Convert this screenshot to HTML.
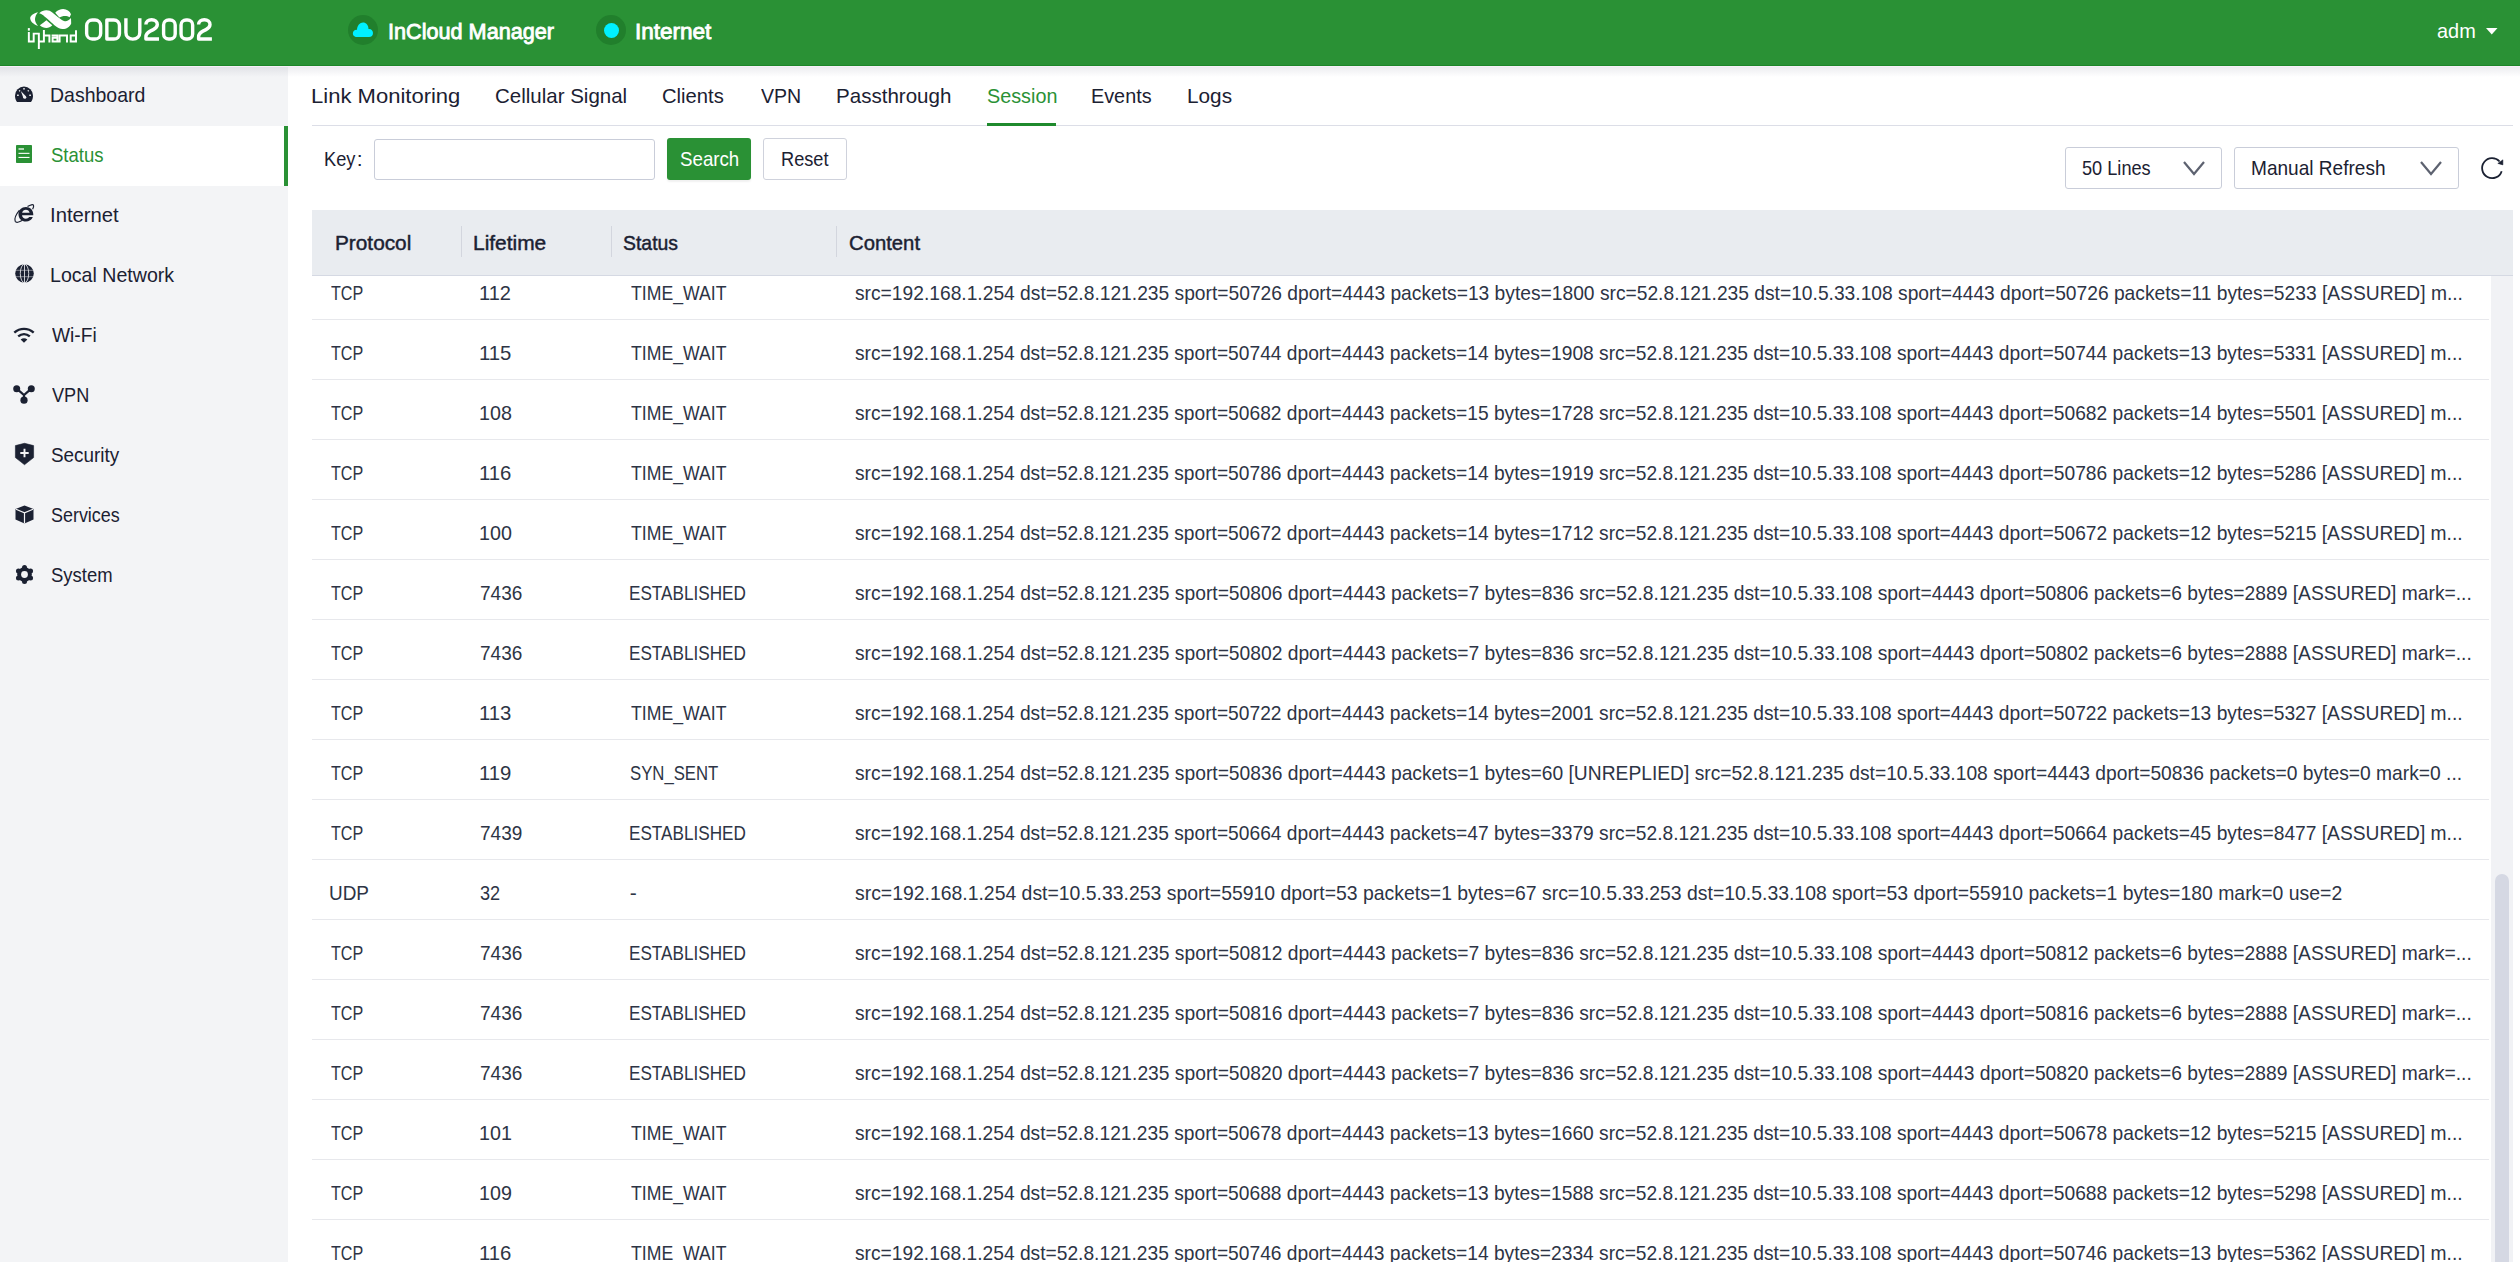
<!DOCTYPE html>
<html><head><meta charset="utf-8">
<style>
html,body{margin:0;padding:0;width:2520px;height:1262px;overflow:hidden;background:#ffffff;font-family:"Liberation Sans",sans-serif;}
.t{position:absolute;transform-origin:0 0;white-space:pre;line-height:normal;font-family:"Liberation Sans",sans-serif;}
.b{position:absolute;box-sizing:border-box;}
svg{position:absolute;overflow:visible;}
</style></head><body>
<!-- sidebar bg -->
<div class=b style="left:0;top:66px;width:288px;height:1196px;background:#f3f4f6"></div>
<div class=b style="left:0;top:126px;width:288px;height:60px;background:#ffffff"></div>
<div class=b style="left:284px;top:126px;width:4px;height:60px;background:#2a9135"></div>
<!-- header shadow -->
<div class=b style="left:0;top:67px;width:2520px;height:10px;background:linear-gradient(rgba(40,45,80,0.085),rgba(40,45,80,0))"></div>
<div class=b style="left:0;top:66px;width:2520px;height:1px;background:#f6f0f8"></div>
<!-- header -->
<div class=b style="left:0;top:0;width:2520px;height:66px;background:#2a9135;border-bottom:1px solid #1c8628"></div>

<!-- tab line -->
<div class=b style="left:312px;top:125px;width:2201px;height:1px;background:#dcdee7"></div>
<div class=b style="left:987px;top:123px;width:69px;height:3px;background:#1f8a2d"></div>

<!-- filter -->
<div class=b style="left:374px;top:139px;width:281px;height:41px;border:1px solid #c9cdd9;border-radius:3px;background:#fff"></div>
<div class=b style="left:667px;top:138px;width:84px;height:42px;border-radius:3px;background:#2a9135;box-shadow:0 2px 2px rgba(0,0,0,0.06)"></div>
<div class=b style="left:763px;top:138px;width:84px;height:42px;border:1px solid #cfd2dc;border-radius:3px;background:#fff"></div>
<div class=b style="left:2065px;top:147px;width:157px;height:42px;border:1px solid #c9cdd9;border-radius:3px;background:#fff"></div>
<div class=b style="left:2234px;top:147px;width:225px;height:42px;border:1px solid #c9cdd9;border-radius:3px;background:#fff"></div>
<svg style="left:2183px;top:161px" width="22" height="14" viewBox="0 0 22 14"><path d="M1 1 L11 13 L21 1" fill="none" stroke="#5d6270" stroke-width="2.2"/></svg>
<svg style="left:2420px;top:161px" width="22" height="14" viewBox="0 0 22 14"><path d="M1 1 L11 13 L21 1" fill="none" stroke="#5d6270" stroke-width="2.2"/></svg>
<svg style="left:2470px;top:150px" width="50" height="40" viewBox="0 0 50 40"><path d="M31.66 21.16 A10 10 0 1 1 29.6 11.5" fill="none" stroke="#1b2132" stroke-width="1.8"/><path d="M27.8 13.4 L32.9 14.9 L32.9 9.8 Z" fill="#1b2132" stroke="#1b2132" stroke-width="0.5" stroke-linejoin="round"/></svg>

<!-- table header -->
<div class=b style="left:312px;top:210px;width:2201px;height:66px;background:#e9ecf0;border-bottom:1px solid #d5d9e3"></div>
<div class=b style="left:461px;top:226px;width:1px;height:31px;background:#d3d6de"></div>
<div class=b style="left:611px;top:226px;width:1px;height:31px;background:#d3d6de"></div>
<div class=b style="left:836px;top:226px;width:1px;height:31px;background:#d3d6de"></div>

<!-- row borders -->
<div id=rows></div>
<div class=b style="left:312px;top:319px;width:2177px;height:1px;background:#e7e8ec"></div><div class=b style="left:312px;top:379px;width:2177px;height:1px;background:#e7e8ec"></div><div class=b style="left:312px;top:439px;width:2177px;height:1px;background:#e7e8ec"></div><div class=b style="left:312px;top:499px;width:2177px;height:1px;background:#e7e8ec"></div><div class=b style="left:312px;top:559px;width:2177px;height:1px;background:#e7e8ec"></div><div class=b style="left:312px;top:619px;width:2177px;height:1px;background:#e7e8ec"></div><div class=b style="left:312px;top:679px;width:2177px;height:1px;background:#e7e8ec"></div><div class=b style="left:312px;top:739px;width:2177px;height:1px;background:#e7e8ec"></div><div class=b style="left:312px;top:799px;width:2177px;height:1px;background:#e7e8ec"></div><div class=b style="left:312px;top:859px;width:2177px;height:1px;background:#e7e8ec"></div><div class=b style="left:312px;top:919px;width:2177px;height:1px;background:#e7e8ec"></div><div class=b style="left:312px;top:979px;width:2177px;height:1px;background:#e7e8ec"></div><div class=b style="left:312px;top:1039px;width:2177px;height:1px;background:#e7e8ec"></div><div class=b style="left:312px;top:1099px;width:2177px;height:1px;background:#e7e8ec"></div><div class=b style="left:312px;top:1159px;width:2177px;height:1px;background:#e7e8ec"></div><div class=b style="left:312px;top:1219px;width:2177px;height:1px;background:#e7e8ec"></div>

<!-- scrollbar -->
<div class=b style="left:2491px;top:276px;width:22px;height:986px;background:#f1f2f5"></div>
<div class=b style="left:2495px;top:874px;width:14px;height:400px;border-radius:7px;background:#d5d8e3"></div>

<!-- header logo -->
<svg style="left:26px;top:6px" width="52" height="46" viewBox="0 0 52 46">
  <g fill="#ffffff">
    <path d="M12 6.2 C6.5 7.5 4 10.3 4.2 12.6 C4.5 15.6 7.2 18.4 12 19.9 C9.8 17.4 8.9 15 9 13 C9.2 10.4 10.4 8 12 6.2 Z"/>
    <path d="M13.5 7.1 C15.5 5 18 4.1 20.5 4.2 C23 4.3 24.5 5 26 6.2 C28.5 8.3 31 10.5 33.2 11.9 C35 13.3 36.8 14.8 38.8 15.2 C41 15.5 43.2 14 45 12 L45.2 17.5 C43.8 21 40.5 23.2 36.4 23.1 C33.8 23 32 22 30.5 20.8 C27.5 18.5 25.5 16.5 23.5 14.7 C21.5 13 19.8 11.6 18.5 10.5 C16.8 9 15.2 7.8 13.5 7.6 Z"/>
    <path d="M29.2 6.7 C31.5 4.3 34.3 3 37.2 3 C40.8 3.1 43.8 5 45 8.3 L43.6 11.2 C42 10.1 40 9.8 37.5 10 C35.8 10.3 34.5 11 33.4 11.6 Z"/>
    <path d="M13.8 19.3 C16.3 17.5 18.5 15.8 20.4 14.3 C22.3 15.9 24.3 17.6 26.3 19.3 C24.5 21 22.5 21.9 20.4 21.9 C18 21.9 15.8 21 13.8 19.3 Z"/>
    <rect x="1.85" y="22.1" width="2" height="2.5"/>
  </g>
  <g fill="none" stroke="#ffffff" stroke-width="1.95" stroke-linejoin="miter">
    <path d="M2.85 26 V35.55 H7.7 V27.6 H12.85 V43.1"/>
    <path d="M12.85 35.55 H17.9 V24.1 M17.9 29.4 H23.4 V36.5"/>
    <path d="M25.6 29.4 H31.4 V35.55 H26.6 V31.7 H31.4 M31.4 35.55 H33.6 V29.4 H41 V36.5"/>
    <path d="M44.7 28.45 V35.55 H50 M44.7 29.4 H50 M50 24.3 V36.5"/>
  </g>
</svg>
<!-- ODU2002 -->
<svg style="left:0;top:0" width="230" height="66" viewBox="0 0 230 66">
  <g fill="none" stroke="#ffffff" stroke-width="3.4" stroke-linejoin="round">
    <rect x="86.65" y="19.95" width="14" height="19.1" rx="5.6" ry="5.6"/>
    <path d="M106.85 20.05 H113.8 C117.2 20.05 119.45 22.3 119.45 25.7 V33.4 C119.45 36.8 117.2 39.05 113.8 39.05 H106.85 Z"/>
    <path d="M125.9 18.3 V32.6 C125.9 36.6 128.6 39.1 132.85 39.1 C137.1 39.1 139.8 36.6 139.8 32.6 V18.3"/>
    <path d="M145.9 24.6 C145.9 21.6 148.2 19.7 151.6 19.7 C155 19.7 157.3 21.8 157.3 24.6 C157.3 27 155.8 28.4 153.3 29.6 L150.2 31.1 C147.3 32.5 145.9 34.4 145.9 37 V39.05 H159"/>
    <rect x="163.6" y="19.95" width="11.6" height="19.1" rx="5" ry="5"/>
    <rect x="181.05" y="19.95" width="11.6" height="19.1" rx="5" ry="5"/>
    <path d="M198.6 24.6 C198.6 21.6 200.9 19.7 204.3 19.7 C207.7 19.7 210 21.8 210 24.6 C210 27 208.5 28.4 206 29.6 L202.9 31.1 C200 32.5 198.6 34.4 198.6 37 V39.05 H211.9"/>
  </g>
</svg>
<!-- incloud icon -->
<div class=b style="left:348px;top:15px;width:30px;height:30px;border-radius:50%;background:#217f2c"></div>
<svg style="left:352px;top:21px" width="22" height="17" viewBox="0 0 22 17"><path d="M5 16 C1.5 16 0.5 13.5 1 11.5 C1.5 9.5 3.5 8.5 5 9 C5 4.5 8 1.5 11 1.5 C14 1.5 16.5 4 16.5 8 C19 7.5 21 9.5 21 12 C21 14.5 19.5 16 17 16 Z" fill="#00f0ff"/></svg>
<div class=b style="left:596px;top:15px;width:30px;height:30px;border-radius:50%;background:#217f2c"></div>
<div class=b style="left:603.5px;top:22.5px;width:15px;height:15px;border-radius:50%;background:#00f0ff"></div>
<svg style="left:2486px;top:28px" width="12" height="7" viewBox="0 0 12 7"><path d="M0 0 H11.5 L5.75 6.5 Z" fill="#fff"/></svg>

<!-- sidebar icons -->
<!-- dashboard gauge -->
<svg style="left:15px;top:86px" width="18" height="16" viewBox="0 0 18 16">
  <path d="M2 16 C0.5 14 0 12 0 9.5 A9 9 0 0 1 18 9.5 C18 12 17.5 14 16 16 Z" fill="#1b2132"/>
  <g fill="#f3f4f6"><rect x="8.3" y="2" width="1.4" height="1.6"/><rect x="2" y="8.6" width="1.8" height="1.3"/><rect x="14.2" y="8.6" width="1.8" height="1.3"/><rect x="4" y="4.2" width="1.3" height="1.3" transform="rotate(45 4.6 4.8)"/><rect x="12.6" y="4.2" width="1.3" height="1.3" transform="rotate(45 13.3 4.8)"/>
  <path d="M5.8 5 L10.9 10.2 L8.5 12.3 Z"/><circle cx="9.8" cy="11.3" r="1.5"/></g>
</svg>
<!-- status -->
<svg style="left:16px;top:145px" width="16" height="18" viewBox="0 0 16 18">
  <rect x="0" y="0" width="16" height="18" rx="0.8" fill="#2a9135"/>
  <rect x="2.5" y="3.2" width="5.5" height="1.6" fill="#ffffff" opacity="0.8"/>
  <rect x="2.5" y="7.8" width="11" height="1.1" fill="#ffffff"/>
  <rect x="2.5" y="11.9" width="11" height="1.1" fill="#ffffff"/>
</svg>
<!-- internet e -->
<svg style="left:14px;top:204px" width="20" height="19" viewBox="0 0 20 19">
  <path d="M19.2 11.2 H8 C8.3 13.4 9.8 14.7 11.9 14.7 C13.3 14.7 14.4 14.1 15.1 13.1 H18.8 C17.8 16 15.1 17.6 11.9 17.6 C7.6 17.6 4.5 14.5 4.5 10.3 C4.5 6.1 7.6 2.9 11.9 2.9 C16.2 2.9 19.3 6 19.3 10.4 Z M8.1 8.7 H15.6 C15.2 6.9 13.8 5.8 11.9 5.8 C10 5.8 8.6 6.9 8.1 8.7 Z" fill="#1b2132"/>
  <path d="M5.5 6.2 C2 10.5 0.3 15 1.2 17.3 C2 19 5 18.4 8.5 16.3" fill="none" stroke="#1b2132" stroke-width="1.2"/>
  <path d="M13.5 2.6 C16.5 0.6 19 0.2 19.5 1.3 C19.9 2.3 19.5 3.6 18.6 5.2" fill="none" stroke="#1b2132" stroke-width="1.2"/>
</svg>
<!-- local network globe -->
<svg style="left:15px;top:264px" width="19" height="19" viewBox="0 0 19 19">
  <circle cx="9.5" cy="9.5" r="9.3" fill="#1b2132"/>
  <g fill="none" stroke="#f3f4f6" stroke-width="0.9" opacity="0.9">
    <path d="M9.5 0 V19"/>
    <ellipse cx="9.5" cy="9.5" rx="4.2" ry="9.3"/>
    <path d="M0 6.3 H19 M0 12.7 H19" opacity="0.6"/>
  </g>
</svg>
<!-- wifi -->
<svg style="left:13px;top:327px" width="22" height="16" viewBox="0 0 22 16">
  <g fill="none" stroke="#1b2132" stroke-width="2.4">
    <path d="M1.3 5.6 C7 0.6 15 0.6 20.7 5.6"/>
    <path d="M5.2 9.4 C8.7 6.4 13.3 6.4 16.8 9.4"/>
  </g>
  <path d="M7.6 12.4 C9.7 10.8 12.3 10.8 14.4 12.4 L11 15.8 Z" fill="#1b2132"/>
</svg>
<!-- vpn -->
<svg style="left:13px;top:385px" width="22" height="19" viewBox="0 0 22 19">
  <g fill="#1b2132">
    <circle cx="3.7" cy="3.7" r="3.5"/><circle cx="18.3" cy="3.7" r="3.5"/><circle cx="11" cy="15.2" r="3.6"/>
  </g>
  <path d="M3.7 3.7 L11 10 L18.3 3.7 M11 10 V15" fill="none" stroke="#1b2132" stroke-width="2.2"/>
</svg>
<!-- security -->
<svg style="left:14.5px;top:443px" width="19" height="22" viewBox="0 0 19 22">
  <path d="M9.5 0.3 L18.6 2.6 V14.6 L9.5 21.7 L0.4 14.6 V2.6 Z" fill="#1b2132" stroke="#1b2132" stroke-width="0.6" stroke-linejoin="round"/>
  <path d="M9.5 5.8 V14.2 M5.3 10 H13.7" stroke="#f3f4f6" stroke-width="1.9"/>
</svg>
<!-- services cube -->
<svg style="left:14.5px;top:505px" width="19" height="19" viewBox="0 0 19 19">
  <path d="M9.5 0.5 L18.5 4 V14.5 L9.5 18.5 L0.5 14.5 V4 Z" fill="#1b2132"/>
  <path d="M1 4.2 L9.5 7.8 L18 4.2 M9.5 7.8 V18.5" fill="none" stroke="#f3f4f6" stroke-width="1.2"/>
</svg>
<!-- system gear -->
<svg style="left:14.5px;top:565px" width="19" height="19" viewBox="0 0 19 19">
  <g fill="#1b2132"><circle cx="9.5" cy="9.5" r="7.3"/><circle cx="15.56" cy="13.00" r="2.5"/><circle cx="9.50" cy="16.50" r="2.5"/><circle cx="3.44" cy="13.00" r="2.5"/><circle cx="3.44" cy="6.00" r="2.5"/><circle cx="9.50" cy="2.50" r="2.5"/><circle cx="15.56" cy="6.00" r="2.5"/></g>
  <circle cx="9.5" cy="9.5" r="3.4" fill="#f3f4f6"/>
</svg>

<div class=t style="left:387.53px;top:19.0px;font-size:22px;font-weight:400;color:#ffffff;transform:scaleX(0.9838);-webkit-text-stroke:0.85px currentColor;">InCloud Manager</div>
<div class=t style="left:634.95px;top:19.0px;font-size:22px;font-weight:400;color:#ffffff;transform:scaleX(1.0233);-webkit-text-stroke:0.85px currentColor;">Internet</div>
<div class=t style="left:2437.05px;top:18.8px;font-size:21px;font-weight:400;color:#ffffff;transform:scaleX(0.9487);">adm</div>
<div class=t style="left:49.94px;top:83.0px;font-size:21px;font-weight:400;color:#1b2132;transform:scaleX(0.9280);">Dashboard</div>
<div class=t style="left:50.92px;top:143.0px;font-size:21px;font-weight:400;color:#2a9135;transform:scaleX(0.8828);">Status</div>
<div class=t style="left:49.87px;top:203.0px;font-size:21px;font-weight:400;color:#1b2132;transform:scaleX(0.9652);">Internet</div>
<div class=t style="left:49.93px;top:263.0px;font-size:21px;font-weight:400;color:#1b2132;transform:scaleX(0.9328);">Local Network</div>
<div class=t style="left:51.80px;top:323.0px;font-size:21px;font-weight:400;color:#1b2132;transform:scaleX(0.9125);">Wi-Fi</div>
<div class=t style="left:51.80px;top:383.0px;font-size:21px;font-weight:400;color:#1b2132;transform:scaleX(0.8619);">VPN</div>
<div class=t style="left:50.90px;top:443.0px;font-size:21px;font-weight:400;color:#1b2132;transform:scaleX(0.8987);">Security</div>
<div class=t style="left:50.95px;top:503.0px;font-size:21px;font-weight:400;color:#1b2132;transform:scaleX(0.8532);">Services</div>
<div class=t style="left:50.92px;top:563.0px;font-size:21px;font-weight:400;color:#1b2132;transform:scaleX(0.8794);">System</div>
<div class=t style="left:310.80px;top:84.0px;font-size:21px;font-weight:400;color:#1b2132;transform:scaleX(1.0489);">Link Monitoring</div>
<div class=t style="left:495.02px;top:84.0px;font-size:21px;font-weight:400;color:#1b2132;transform:scaleX(0.9759);">Cellular Signal</div>
<div class=t style="left:662.04px;top:84.0px;font-size:21px;font-weight:400;color:#1b2132;transform:scaleX(0.9619);">Clients</div>
<div class=t style="left:760.90px;top:84.0px;font-size:21px;font-weight:400;color:#1b2132;transform:scaleX(0.9310);">VPN</div>
<div class=t style="left:836.34px;top:84.0px;font-size:21px;font-weight:400;color:#1b2132;transform:scaleX(0.9783);">Passthrough</div>
<div class=t style="left:986.76px;top:84.0px;font-size:21px;font-weight:400;color:#2a9135;transform:scaleX(0.9425);">Session</div>
<div class=t style="left:1091.41px;top:84.0px;font-size:21px;font-weight:400;color:#1b2132;transform:scaleX(0.9435);">Events</div>
<div class=t style="left:1186.52px;top:84.0px;font-size:21px;font-weight:400;color:#1b2132;transform:scaleX(0.9884);">Logs</div>
<div class=t style="left:323.66px;top:146.8px;font-size:21px;font-weight:400;color:#1b2132;transform:scaleX(0.8676);">Key</div>
<div class=t style="left:356.80px;top:146.8px;font-size:21px;font-weight:400;color:#1b2132;">:</div>
<div class=t style="left:680.11px;top:147.0px;font-size:21px;font-weight:400;color:#ffffff;transform:scaleX(0.8906);">Search</div>
<div class=t style="left:780.97px;top:147.0px;font-size:21px;font-weight:400;color:#1b2132;transform:scaleX(0.8660);">Reset</div>
<div class=t style="left:2082.33px;top:155.7px;font-size:21px;font-weight:400;color:#1b2132;transform:scaleX(0.8654);">50 Lines</div>
<div class=t style="left:2250.58px;top:155.7px;font-size:21px;font-weight:400;color:#1b2132;transform:scaleX(0.9076);">Manual Refresh</div>
<div class=t style="left:334.72px;top:230.6px;font-size:21px;font-weight:400;color:#1b2132;transform:scaleX(0.9905);-webkit-text-stroke:0.45px currentColor;">Protocol</div>
<div class=t style="left:472.81px;top:230.6px;font-size:21px;font-weight:400;color:#1b2132;transform:scaleX(0.9958);-webkit-text-stroke:0.45px currentColor;">Lifetime</div>
<div class=t style="left:623.48px;top:230.6px;font-size:21px;font-weight:400;color:#1b2132;transform:scaleX(0.9241);-webkit-text-stroke:0.45px currentColor;">Status</div>
<div class=t style="left:848.53px;top:230.6px;font-size:21px;font-weight:400;color:#1b2132;transform:scaleX(0.9658);-webkit-text-stroke:0.45px currentColor;">Content</div>
<div class=t style="left:330.80px;top:281.4px;font-size:21px;font-weight:400;color:#2d3445;transform:scaleX(0.7683);">TCP</div>
<div class=t style="left:479.09px;top:281.4px;font-size:21px;font-weight:400;color:#2d3445;transform:scaleX(0.9548);">112</div>
<div class=t style="left:630.70px;top:281.4px;font-size:21px;font-weight:400;color:#2d3445;transform:scaleX(0.8407);">TIME_WAIT</div>
<div class=t style="left:854.58px;top:281.4px;font-size:21px;font-weight:400;color:#2d3445;transform:scaleX(0.9153);">src=192.168.1.254 dst=52.8.121.235 sport=50726 dport=4443 packets=13 bytes=1800 src=52.8.121.235 dst=10.5.33.108 sport=4443 dport=50726 packets=11 bytes=5233 [ASSURED] m...</div>
<div class=t style="left:330.80px;top:341.4px;font-size:21px;font-weight:400;color:#2d3445;transform:scaleX(0.7683);">TCP</div>
<div class=t style="left:479.06px;top:341.4px;font-size:21px;font-weight:400;color:#2d3445;transform:scaleX(0.9677);">115</div>
<div class=t style="left:630.70px;top:341.4px;font-size:21px;font-weight:400;color:#2d3445;transform:scaleX(0.8407);">TIME_WAIT</div>
<div class=t style="left:854.59px;top:341.4px;font-size:21px;font-weight:400;color:#2d3445;transform:scaleX(0.9143);">src=192.168.1.254 dst=52.8.121.235 sport=50744 dport=4443 packets=14 bytes=1908 src=52.8.121.235 dst=10.5.33.108 sport=4443 dport=50744 packets=13 bytes=5331 [ASSURED] m...</div>
<div class=t style="left:330.80px;top:401.4px;font-size:21px;font-weight:400;color:#2d3445;transform:scaleX(0.7683);">TCP</div>
<div class=t style="left:479.12px;top:401.4px;font-size:21px;font-weight:400;color:#2d3445;transform:scaleX(0.9375);">108</div>
<div class=t style="left:630.70px;top:401.4px;font-size:21px;font-weight:400;color:#2d3445;transform:scaleX(0.8407);">TIME_WAIT</div>
<div class=t style="left:854.59px;top:401.4px;font-size:21px;font-weight:400;color:#2d3445;transform:scaleX(0.9143);">src=192.168.1.254 dst=52.8.121.235 sport=50682 dport=4443 packets=15 bytes=1728 src=52.8.121.235 dst=10.5.33.108 sport=4443 dport=50682 packets=14 bytes=5501 [ASSURED] m...</div>
<div class=t style="left:330.80px;top:461.4px;font-size:21px;font-weight:400;color:#2d3445;transform:scaleX(0.7683);">TCP</div>
<div class=t style="left:479.06px;top:461.4px;font-size:21px;font-weight:400;color:#2d3445;transform:scaleX(0.9677);">116</div>
<div class=t style="left:630.70px;top:461.4px;font-size:21px;font-weight:400;color:#2d3445;transform:scaleX(0.8407);">TIME_WAIT</div>
<div class=t style="left:854.59px;top:461.4px;font-size:21px;font-weight:400;color:#2d3445;transform:scaleX(0.9143);">src=192.168.1.254 dst=52.8.121.235 sport=50786 dport=4443 packets=14 bytes=1919 src=52.8.121.235 dst=10.5.33.108 sport=4443 dport=50786 packets=12 bytes=5286 [ASSURED] m...</div>
<div class=t style="left:330.80px;top:521.4px;font-size:21px;font-weight:400;color:#2d3445;transform:scaleX(0.7683);">TCP</div>
<div class=t style="left:479.12px;top:521.4px;font-size:21px;font-weight:400;color:#2d3445;transform:scaleX(0.9375);">100</div>
<div class=t style="left:630.70px;top:521.4px;font-size:21px;font-weight:400;color:#2d3445;transform:scaleX(0.8407);">TIME_WAIT</div>
<div class=t style="left:854.59px;top:521.4px;font-size:21px;font-weight:400;color:#2d3445;transform:scaleX(0.9143);">src=192.168.1.254 dst=52.8.121.235 sport=50672 dport=4443 packets=14 bytes=1712 src=52.8.121.235 dst=10.5.33.108 sport=4443 dport=50672 packets=12 bytes=5215 [ASSURED] m...</div>
<div class=t style="left:330.80px;top:581.4px;font-size:21px;font-weight:400;color:#2d3445;transform:scaleX(0.7683);">TCP</div>
<div class=t style="left:480.10px;top:581.4px;font-size:21px;font-weight:400;color:#2d3445;transform:scaleX(0.9044);">7436</div>
<div class=t style="left:629.07px;top:581.4px;font-size:21px;font-weight:400;color:#2d3445;transform:scaleX(0.8164);">ESTABLISHED</div>
<div class=t style="left:854.58px;top:581.4px;font-size:21px;font-weight:400;color:#2d3445;transform:scaleX(0.9162);">src=192.168.1.254 dst=52.8.121.235 sport=50806 dport=4443 packets=7 bytes=836 src=52.8.121.235 dst=10.5.33.108 sport=4443 dport=50806 packets=6 bytes=2889 [ASSURED] mark=...</div>
<div class=t style="left:330.80px;top:641.4px;font-size:21px;font-weight:400;color:#2d3445;transform:scaleX(0.7683);">TCP</div>
<div class=t style="left:480.10px;top:641.4px;font-size:21px;font-weight:400;color:#2d3445;transform:scaleX(0.9044);">7436</div>
<div class=t style="left:629.07px;top:641.4px;font-size:21px;font-weight:400;color:#2d3445;transform:scaleX(0.8164);">ESTABLISHED</div>
<div class=t style="left:854.58px;top:641.4px;font-size:21px;font-weight:400;color:#2d3445;transform:scaleX(0.9162);">src=192.168.1.254 dst=52.8.121.235 sport=50802 dport=4443 packets=7 bytes=836 src=52.8.121.235 dst=10.5.33.108 sport=4443 dport=50802 packets=6 bytes=2888 [ASSURED] mark=...</div>
<div class=t style="left:330.80px;top:701.4px;font-size:21px;font-weight:400;color:#2d3445;transform:scaleX(0.7683);">TCP</div>
<div class=t style="left:479.06px;top:701.4px;font-size:21px;font-weight:400;color:#2d3445;transform:scaleX(0.9677);">113</div>
<div class=t style="left:630.70px;top:701.4px;font-size:21px;font-weight:400;color:#2d3445;transform:scaleX(0.8407);">TIME_WAIT</div>
<div class=t style="left:854.59px;top:701.4px;font-size:21px;font-weight:400;color:#2d3445;transform:scaleX(0.9143);">src=192.168.1.254 dst=52.8.121.235 sport=50722 dport=4443 packets=14 bytes=2001 src=52.8.121.235 dst=10.5.33.108 sport=4443 dport=50722 packets=13 bytes=5327 [ASSURED] m...</div>
<div class=t style="left:330.80px;top:761.4px;font-size:21px;font-weight:400;color:#2d3445;transform:scaleX(0.7683);">TCP</div>
<div class=t style="left:479.06px;top:761.4px;font-size:21px;font-weight:400;color:#2d3445;transform:scaleX(0.9677);">119</div>
<div class=t style="left:629.90px;top:761.4px;font-size:21px;font-weight:400;color:#2d3445;transform:scaleX(0.7964);">SYN_SENT</div>
<div class=t style="left:854.58px;top:761.4px;font-size:21px;font-weight:400;color:#2d3445;transform:scaleX(0.9162);">src=192.168.1.254 dst=52.8.121.235 sport=50836 dport=4443 packets=1 bytes=60 [UNREPLIED] src=52.8.121.235 dst=10.5.33.108 sport=4443 dport=50836 packets=0 bytes=0 mark=0 ...</div>
<div class=t style="left:330.80px;top:821.4px;font-size:21px;font-weight:400;color:#2d3445;transform:scaleX(0.7683);">TCP</div>
<div class=t style="left:480.10px;top:821.4px;font-size:21px;font-weight:400;color:#2d3445;transform:scaleX(0.9044);">7439</div>
<div class=t style="left:629.07px;top:821.4px;font-size:21px;font-weight:400;color:#2d3445;transform:scaleX(0.8164);">ESTABLISHED</div>
<div class=t style="left:854.59px;top:821.4px;font-size:21px;font-weight:400;color:#2d3445;transform:scaleX(0.9143);">src=192.168.1.254 dst=52.8.121.235 sport=50664 dport=4443 packets=47 bytes=3379 src=52.8.121.235 dst=10.5.33.108 sport=4443 dport=50664 packets=45 bytes=8477 [ASSURED] m...</div>
<div class=t style="left:329.00px;top:881.4px;font-size:21px;font-weight:400;color:#2d3445;transform:scaleX(0.9024);">UDP</div>
<div class=t style="left:480.14px;top:881.4px;font-size:21px;font-weight:400;color:#2d3445;transform:scaleX(0.8636);">32</div>
<div class=t style="left:629.70px;top:881.4px;font-size:21px;font-weight:400;color:#2d3445;">-</div>
<div class=t style="left:854.58px;top:881.4px;font-size:21px;font-weight:400;color:#2d3445;transform:scaleX(0.9237);">src=192.168.1.254 dst=10.5.33.253 sport=55910 dport=53 packets=1 bytes=67 src=10.5.33.253 dst=10.5.33.108 sport=53 dport=55910 packets=1 bytes=180 mark=0 use=2</div>
<div class=t style="left:330.80px;top:941.4px;font-size:21px;font-weight:400;color:#2d3445;transform:scaleX(0.7683);">TCP</div>
<div class=t style="left:480.10px;top:941.4px;font-size:21px;font-weight:400;color:#2d3445;transform:scaleX(0.9044);">7436</div>
<div class=t style="left:629.07px;top:941.4px;font-size:21px;font-weight:400;color:#2d3445;transform:scaleX(0.8164);">ESTABLISHED</div>
<div class=t style="left:854.58px;top:941.4px;font-size:21px;font-weight:400;color:#2d3445;transform:scaleX(0.9162);">src=192.168.1.254 dst=52.8.121.235 sport=50812 dport=4443 packets=7 bytes=836 src=52.8.121.235 dst=10.5.33.108 sport=4443 dport=50812 packets=6 bytes=2888 [ASSURED] mark=...</div>
<div class=t style="left:330.80px;top:1001.4px;font-size:21px;font-weight:400;color:#2d3445;transform:scaleX(0.7683);">TCP</div>
<div class=t style="left:480.10px;top:1001.4px;font-size:21px;font-weight:400;color:#2d3445;transform:scaleX(0.9044);">7436</div>
<div class=t style="left:629.07px;top:1001.4px;font-size:21px;font-weight:400;color:#2d3445;transform:scaleX(0.8164);">ESTABLISHED</div>
<div class=t style="left:854.58px;top:1001.4px;font-size:21px;font-weight:400;color:#2d3445;transform:scaleX(0.9162);">src=192.168.1.254 dst=52.8.121.235 sport=50816 dport=4443 packets=7 bytes=836 src=52.8.121.235 dst=10.5.33.108 sport=4443 dport=50816 packets=6 bytes=2888 [ASSURED] mark=...</div>
<div class=t style="left:330.80px;top:1061.4px;font-size:21px;font-weight:400;color:#2d3445;transform:scaleX(0.7683);">TCP</div>
<div class=t style="left:480.10px;top:1061.4px;font-size:21px;font-weight:400;color:#2d3445;transform:scaleX(0.9044);">7436</div>
<div class=t style="left:629.07px;top:1061.4px;font-size:21px;font-weight:400;color:#2d3445;transform:scaleX(0.8164);">ESTABLISHED</div>
<div class=t style="left:854.58px;top:1061.4px;font-size:21px;font-weight:400;color:#2d3445;transform:scaleX(0.9162);">src=192.168.1.254 dst=52.8.121.235 sport=50820 dport=4443 packets=7 bytes=836 src=52.8.121.235 dst=10.5.33.108 sport=4443 dport=50820 packets=6 bytes=2889 [ASSURED] mark=...</div>
<div class=t style="left:330.80px;top:1121.4px;font-size:21px;font-weight:400;color:#2d3445;transform:scaleX(0.7683);">TCP</div>
<div class=t style="left:479.12px;top:1121.4px;font-size:21px;font-weight:400;color:#2d3445;transform:scaleX(0.9375);">101</div>
<div class=t style="left:630.70px;top:1121.4px;font-size:21px;font-weight:400;color:#2d3445;transform:scaleX(0.8407);">TIME_WAIT</div>
<div class=t style="left:854.59px;top:1121.4px;font-size:21px;font-weight:400;color:#2d3445;transform:scaleX(0.9143);">src=192.168.1.254 dst=52.8.121.235 sport=50678 dport=4443 packets=13 bytes=1660 src=52.8.121.235 dst=10.5.33.108 sport=4443 dport=50678 packets=12 bytes=5215 [ASSURED] m...</div>
<div class=t style="left:330.80px;top:1181.4px;font-size:21px;font-weight:400;color:#2d3445;transform:scaleX(0.7683);">TCP</div>
<div class=t style="left:479.12px;top:1181.4px;font-size:21px;font-weight:400;color:#2d3445;transform:scaleX(0.9375);">109</div>
<div class=t style="left:630.70px;top:1181.4px;font-size:21px;font-weight:400;color:#2d3445;transform:scaleX(0.8407);">TIME_WAIT</div>
<div class=t style="left:854.59px;top:1181.4px;font-size:21px;font-weight:400;color:#2d3445;transform:scaleX(0.9143);">src=192.168.1.254 dst=52.8.121.235 sport=50688 dport=4443 packets=13 bytes=1588 src=52.8.121.235 dst=10.5.33.108 sport=4443 dport=50688 packets=12 bytes=5298 [ASSURED] m...</div>
<div class=t style="left:330.80px;top:1241.4px;font-size:21px;font-weight:400;color:#2d3445;transform:scaleX(0.7683);">TCP</div>
<div class=t style="left:479.06px;top:1241.4px;font-size:21px;font-weight:400;color:#2d3445;transform:scaleX(0.9677);">116</div>
<div class=t style="left:630.70px;top:1241.4px;font-size:21px;font-weight:400;color:#2d3445;transform:scaleX(0.8407);">TIME_WAIT</div>
<div class=t style="left:854.59px;top:1241.4px;font-size:21px;font-weight:400;color:#2d3445;transform:scaleX(0.9143);">src=192.168.1.254 dst=52.8.121.235 sport=50746 dport=4443 packets=14 bytes=2334 src=52.8.121.235 dst=10.5.33.108 sport=4443 dport=50746 packets=13 bytes=5362 [ASSURED] m...</div>
</body></html>
